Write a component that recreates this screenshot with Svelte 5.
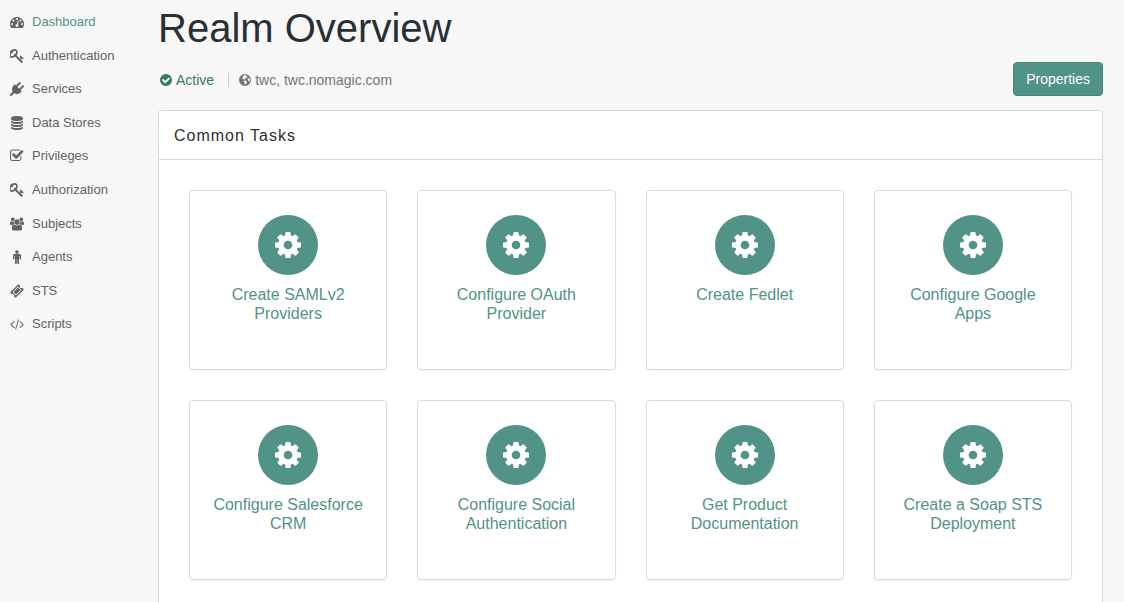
<script>
  const icons = {
    dashboard: { box: '0 0 1792 1792', d: 'M384 1152q0-53-37.5-90.5t-90.5-37.5-90.5 37.5-37.5 90.5 37.5 90.5 90.5 37.5 90.5-37.5 37.5-90.5zm192-448q0-53-37.5-90.5t-90.5-37.5-90.5 37.5-37.5 90.5 37.5 90.5 90.5 37.5 90.5-37.5 37.5-90.5zm428 481l101-382q6-26-7.5-48.5t-38.5-29.5-48 6.5-30 39.5l-101 382q-60 5-107 43.5t-63 98.5q-20 77 20 146t117 89 146-20 89-117q16-60-6-117t-72-91zm660-33q0-53-37.5-90.5t-90.5-37.5-90.5 37.5-37.5 90.5 37.5 90.5 90.5 37.5 90.5-37.5 37.5-90.5zm-640-640q0-53-37.5-90.5t-90.5-37.5-90.5 37.5-37.5 90.5 37.5 90.5 90.5 37.5 90.5-37.5 37.5-90.5zm448 192q0-53-37.5-90.5t-90.5-37.5-90.5 37.5-37.5 90.5 37.5 90.5 90.5 37.5 90.5-37.5 37.5-90.5zm320 448q0 261-141 483-19 29-54 29h-1402q-35 0-54-29-141-221-141-483 0-182 71-348t191-286 286-191 348-71 348 71 286 191 191 286 71 348z' },
    key: { box: '128 128 1600 1600', d: 'M832 512q0-80-56-136t-136-56-136 56-56 136q0 42 19 83-41-19-83-19-80 0-136 56t-56 136 56 136 136 56 136-56 56-136q0-42-19-83 41 19 83 19 80 0 136-56t56-136zm851 704q0 17-49 66t-66 49q-9 0-28.5-16t-36.5-33-38.5-40-24.5-26l-96 96 220 220q28 28 28 68 0 42-39 81t-81 39q-40 0-68-28l-671-671q-176 131-365 131-163 0-265.5-102.5t-102.5-265.5q0-160 95-313t248-248 313-95q163 0 265.5 102.5t102.5 265.5q0 189-131 365l355 355 96-96q-3-3-26-24.5t-40-38.5-33-36.5-16-28.5q0-17 49-66t66-49q13 0 23 10 6 6 46 44.5t82 79.5 86.5 86 73 78 28.5 41z' },
    plug: { box: '0 0 1792 1792', d: 'M1755 453q37 38 37 90.5t-37 90.5l-401 400 150 150-160 160q-163 163-389.5 186.5t-411.5-100.5l-362 362h-181v-181l362-362q-124-185-100.5-411.5t186.5-389.5l160-160 150 150 400-401q38-37 91-37t90 37 37 90.5-37 90.5l-400 401 234 234 401-400q38-37 91-37t90 37z' },
    database: { box: '0 0 1792 1792', d: 'M896 768q237 0 443-43t325-127v170q0 69-103 128t-280 93.5-385 34.5-385-34.5-280-93.5-103-128v-170q119 84 325 127t443 43zm0 768q237 0 443-43t325-127v170q0 69-103 128t-280 93.5-385 34.5-385-34.5-280-93.5-103-128v-170q119 84 325 127t443 43zm0-384q237 0 443-43t325-127v170q0 69-103 128t-280 93.5-385 34.5-385-34.5-280-93.5-103-128v-170q119 84 325 127t443 43zm0-1152q208 0 385 34.5t280 93.5 103 128v128q0 69-103 128t-280 93.5-385 34.5-385-34.5-280-93.5-103-128v-128q0-69 103-128t280-93.5 385-34.5z' },
    check: { box: '64 64 1728 1728', d: 'M1472 930v318q0 119-84.5 203.5t-203.5 84.5h-832q-119 0-203.5-84.5t-84.5-203.5v-832q0-119 84.5-203.5t203.5-84.5h832q63 0 117 25 15 7 18 23 3 17-9 29l-49 49q-10 10-23 10-3 0-9-2-23-6-45-6h-832q-66 0-113 47t-47 113v832q0 66 47 113t113 47h832q66 0 113-47t47-113v-254q0-13 9-22l64-64q10-10 23-10 6 0 12 3 20 8 20 29zm231-489l-814 814q-24 24-57 24t-57-24l-430-430q-24-24-24-57t24-57l110-110q24-24 57-24t57 24l263 263 647-647q24-24 57-24t57 24l110 110q24 24 24 57t-24 57z' },
    group: { box: '0 0 1920 1792', d: 'M593 896q-162 5-265 128h-134q-82 0-138-40.5t-56-118.5q0-353 124-353 6 0 43.5 21t97.5 42.5 119 21.5q67 0 133-23-5 37-5 66 0 139 81 256zm1071 637q0 120-73 189.5t-194 69.5h-874q-121 0-194-69.5t-73-189.5q0-53 3.5-103.5t14-109 26.5-108.5 43-97.5 62-81 85.5-53.5 111.5-20q10 0 43 21.5t73 48 107 48 135 21.5 135-21.5 107-48 73-48 43-21.5q61 0 111.5 20t85.5 53.5 62 81 43 97.5 26.5 108.5 14 109 3.5 103.5zm-1024-1277q0 106-75 181t-181 75-181-75-75-181 75-181 181-75 181 75 75 181zm704 384q0 159-112.5 271.5t-271.5 112.5-271.5-112.5-112.5-271.5 112.5-271.5 271.5-112.5 271.5 112.5 112.5 271.5zm576 225q0 78-56 118.5t-138 40.5h-134q-103-123-265-128 81-117 81-256 0-29-5-66 66 23 133 23 59 0 119-21.5t97.5-42.5 43.5-21q124 0 124 353zm-128-609q0 106-75 181t-181 75-181-75-75-181 75-181 181-75 181 75 75 181z' },
    male: { box: '0 0 1792 1792', d: 'M1408 704v416q0 40-28 68t-68 28-68-28-28-68v-352h-64v912q0 46-33 79t-79 33-79-33-33-79v-464h-64v464q0 46-33 79t-79 33-79-33-33-79v-912h-64v352q0 40-28 68t-68 28-68-28-28-68v-416q0-80 56-136t136-56h640q80 0 136 56t56 136zm-288-448q0 93-65.5 158.5t-158.5 65.5-158.5-65.5-65.5-158.5 65.5-158.5 158.5-65.5 158.5 65.5 65.5 158.5z' },
    ticket: { box: '0 0 1792 1792', d: 'M1024 452l316 316-572 572-316-316zm-211 979l618-618q19-19 19-45t-19-45l-362-362q-18-18-45-18t-45 18l-618 618q-19 19-19 45t19 45l362 362q18 18 45 18t45-18zm889-637l-907 908q-37 37-90.5 37t-90.5-37l-126-125q56-56 56-136t-56-136-136-56-136 56l-125-126q-37-37-37-90.5t37-90.5l907-906q37-37 90.5-37t90.5 37l125 125q-56 56-56 136t56 136 136 56 136-56l126 125q37 37 37 90.5t-37 90.5z' },
    code: { box: '64 0 1920 1792', d: 'M681 1399l-50 50q-10 10-23 10t-23-10l-466-466q-10-10-10-23t10-23l466-466q10-10 23-10t23 10l50 50q10 10 10 23t-10 23l-393 393 393 393q10 10 10 23t-10 23zm591-1067l-373 1291q-4 13-15.5 19.5t-23.5 2.5l-62-17q-13-4-19.5-15.5t-2.5-24.5l373-1291q4-13 15.5-19.5t23.5-2.5l62 17q13 4 19.5 15.5t2.5 24.5zm657 651l-466 466q-10 10-23 10t-23-10l-50-50q-10-10-10-23t10-23l393-393-393-393q-10-10-10-23t10-23l50-50q10-10 23-10t23 10l466 466q10 10 10 23t-10 23z' },
    active: { box: '128 128 1536 1536', d: 'M1412 734q0-28-18-46l-91-90q-19-19-45-19t-45 19l-408 407-226-226q-19-19-45-19t-45 19l-91 90q-18 18-18 46 0 27 18 45l362 362q19 19 45 19 27 0 46-19l543-543q18-18 18-45zm252 162q0 209-103 385.5t-279.5 279.5-385.5 103-385.5-103-279.5-279.5-103-385.5 103-385.5 279.5-279.5 385.5-103 385.5 103 279.5 279.5 103 385.5z' },
    globe: { box: '0 0 24 24', d: 'M12 0a12 12 0 1 1 0 24a12 12 0 1 1 0-24zM10.5 2.2L8.4 4.6L6.2 8.4L8.4 9.4L10.4 11.6L12.4 9.2L14.4 8L16.8 5.8L15 3.4L13 2zM10.4 13L9.6 15.2L11.4 18L11.6 21.8L13.6 20.6L15.6 17.4L15.4 14.8L12.8 13.2zM18.2 8.6L17 10.8L18.6 13.2L20.2 13.8L20.6 16.2L22.2 12.8L21.6 9.4L20.2 8z' },
    cog: { box: '128 128 1536 1536', d: 'M1152 896q0-106-75-181t-181-75-181 75-75 181 75 181 181 75 181-75 75-181zm512-109v222q0 12-8 23t-20 13l-185 28q-19 54-39 91 35 50 107 138 10 12 10 25t-9 23q-27 37-99 108t-94 71q-12 0-26-9l-138-108q-44 23-91 38-16 136-29 186-7 28-36 28h-222q-14 0-24.5-8.5t-11.5-21.5l-28-184q-49-16-90-37l-141 107q-10 9-25 9-14 0-25-11-126-114-165-168-7-10-7-23 0-12 8-23 15-21 51-66.5t54-70.5q-27-50-41-99l-183-27q-13-2-21-12.5t-8-23.5v-222q0-12 8-23t19-13l186-28q14-46 39-92-40-57-107-138-10-12-10-24 0-10 9-23 26-36 98.5-107.5t94.5-71.5q13 0 26 10l138 107q44-23 91-38 16-136 29-186 7-28 36-28h222q14 0 24.5 8.5t11.5 21.5l28 184q49 16 90 37l142-107q9-9 24-9 13 0 25 10 129 119 165 170 7 8 7 22 0 12-8 23-15 21-51 66.5t-54 70.5q26 50 41 98l183 28q13 2 21 12.5t8 23.5z' }
  };

  const nav = [
    ['Dashboard', 'dashboard'],
    ['Authentication', 'key'],
    ['Services', 'plug'],
    ['Data Stores', 'database'],
    ['Privileges', 'check'],
    ['Authorization', 'key'],
    ['Subjects', 'group'],
    ['Agents', 'male'],
    ['STS', 'ticket'],
    ['Scripts', 'code']
  ];

  const tasks = [
    'Create SAMLv2 Providers',
    'Configure OAuth Provider',
    'Create Fedlet',
    'Configure Google Apps',
    'Configure Salesforce CRM',
    'Configure Social Authentication',
    'Get Product Documentation',
    'Create a Soap STS Deployment'
  ];
</script>

{#snippet icon(name)}
  <svg class="icon" viewBox={icons[name].box} aria-hidden="true">
    <path fill-rule={name === 'globe' ? 'evenodd' : 'nonzero'} d={icons[name].d} />
  </svg>
{/snippet}

<div class="layout">
  <nav class="sidebar">
    <ul>
      {#each nav as [label, name], i}
        <li>
          <a href="#{label}" class:current={i === 0}>{@render icon(name)}<span>{label}</span></a>
        </li>
      {/each}
    </ul>
  </nav>

  <main>
    <h1>Realm Overview</h1>
    <div class="toolbar">
      <ul class="status">
        <li class="active">{@render icon('active')}Active</li>
        <li>{@render icon('globe')}twc, twc.nomagic.com</li>
      </ul>
      <button type="button">Properties</button>
    </div>

    <section class="panel">
      <h2>Common Tasks</h2>
      <div class="tasks">
        {#each tasks as task}
          <a class="card" href="#{task}">
            <span class="badge">{@render icon('cog')}</span>
            <span class="title">{task}</span>
          </a>
        {/each}
      </div>
    </section>
  </main>
</div>

<style>
  :global(body) {
    margin: 0;
    background: #f7f7f7;
    color: #293033;
    font-family: "Liberation Sans", Arial, sans-serif;
    font-size: 14px;
    line-height: 20px;
  }
  .layout {
    display: grid;
    grid-template-columns: 138px minmax(0, 1fr);
    gap: 20px;
    padding-right: 21px;
  }
  ul {
    list-style: none;
    margin: 0;
    padding: 0;
  }
  a {
    color: inherit;
    text-decoration: none;
  }
  .icon {
    display: block;
    flex: none;
    fill: currentColor;
  }
  .sidebar ul {
    display: grid;
    grid-auto-rows: minmax(0, 1fr);
    height: 336px;
    padding-top: 5px;
  }
  .sidebar a {
    display: flex;
    align-items: center;
    gap: 8px;
    padding: 7px 10px;
    color: #626262;
    font-size: 13px;
  }
  .sidebar .icon {
    width: 14px;
    height: 14px;
  }
  .sidebar .current span {
    color: #519387;
  }
  h1 {
    margin: 0;
    padding-top: 6px;
    font-size: 40px;
    font-weight: 400;
    line-height: 44px;
  }
  .toolbar {
    display: flex;
    justify-content: space-between;
    align-items: center;
    margin: 12px 0 14px;
  }
  .status {
    display: flex;
    padding-top: 2px;
    color: #757575;
  }
  .status li {
    display: flex;
    align-items: center;
    gap: 4px;
    padding: 0 11px;
  }
  .status .active {
    padding: 0 14px 0 2px;
    color: #38786b;
  }
  .status li + li {
    position: relative;
  }
  .status li + li::before {
    content: "";
    position: absolute;
    left: 0;
    top: 3px;
    width: 1px;
    height: 14px;
    background: #ccc;
  }
  .status .icon {
    width: 12px;
    height: 12px;
  }
  button {
    padding: 6px 12px;
    border: 1px solid #488378;
    border-radius: 4px;
    background: #519387;
    color: #fff;
    font: inherit;
  }
  .panel {
    border: 1px solid #dbdbdb;
    border-radius: 4px;
    background: #fff;
    box-shadow: 0 1px 2px rgba(0, 0, 0, 0.05);
  }
  h2 {
    margin: 0;
    padding: 15px 15px 13px;
    border-bottom: 1px solid #dbdbdb;
    font-size: 16px;
    font-weight: 400;
    letter-spacing: 1px;
    line-height: 20px;
  }
  .tasks {
    display: grid;
    grid-template-columns: repeat(4, minmax(0, 1fr));
    grid-auto-rows: 180px;
    gap: 30px;
    padding: 30px;
  }
  .card {
    display: flex;
    flex-direction: column;
    align-items: center;
    gap: 10px;
    padding: 24px 20px;
    border: 1px solid #dbdbdb;
    border-radius: 4px;
    box-shadow: 0 1px 2px rgba(0, 0, 0, 0.05);
    color: #519387;
    font-size: 16px;
    line-height: 19px;
    text-align: center;
  }
  .badge {
    display: grid;
    place-items: center;
    width: 60px;
    height: 60px;
    border-radius: 50%;
    background: #519387;
    color: #fff;
  }
  .badge .icon {
    width: 26px;
    height: 26px;
  }
</style>
